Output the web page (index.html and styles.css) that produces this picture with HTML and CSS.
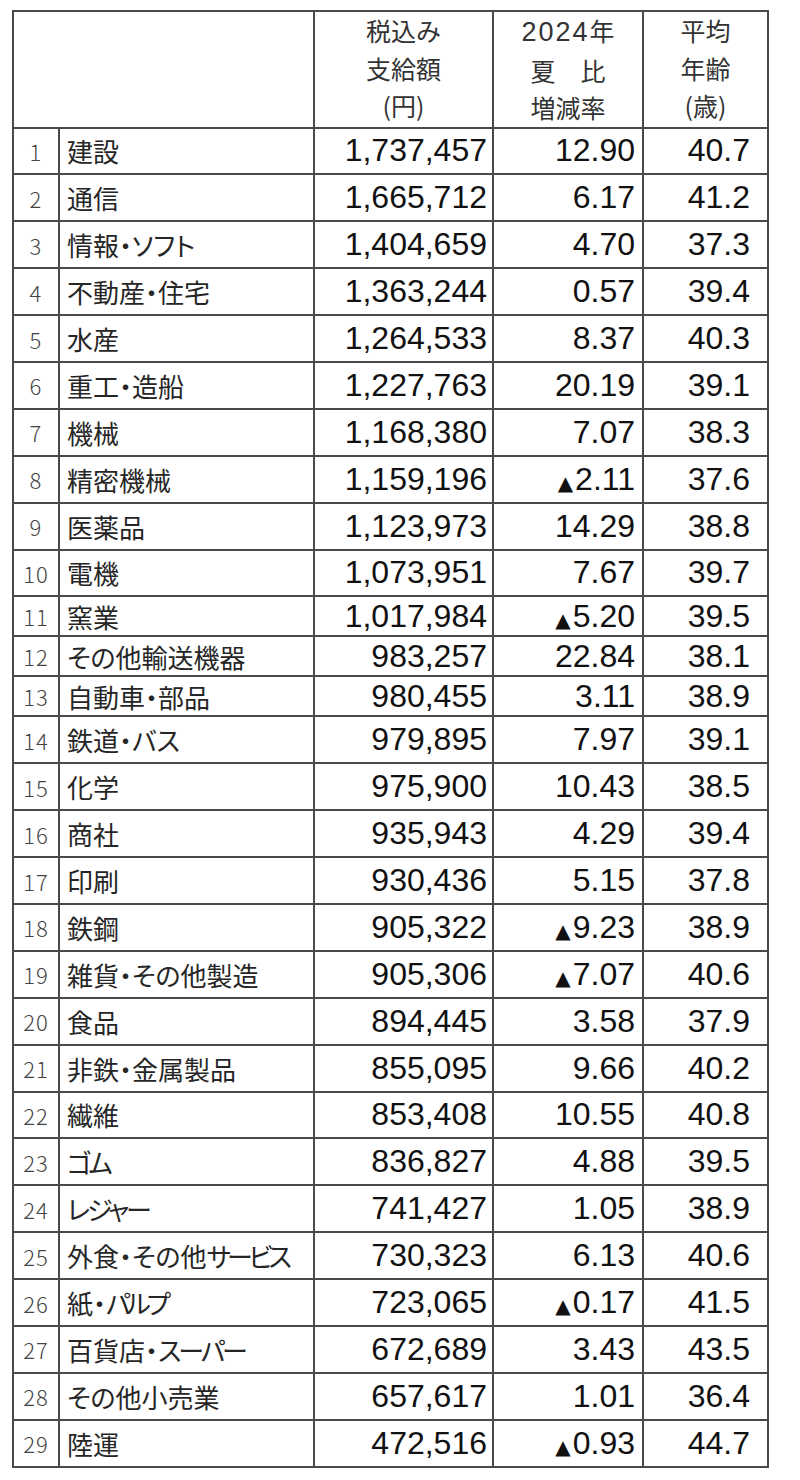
FILE: index.html
```html
<!DOCTYPE html>
<html lang="ja">
<head>
<meta charset="utf-8">
<title>業種別 夏のボーナス</title>
<link rel="stylesheet" href="styles.css">
</head>
<body>
<table class="tbl">
  <colgroup>
    <col class="c-rank"><col class="c-name"><col class="c-amt"><col class="c-rate"><col class="c-age">
  </colgroup>
  <thead>
    <tr class="head">
      <th colspan="2"></th>
      <th><span class="hl">税込み</span><span class="hl">支給額</span><span class="hl">(円)</span></th>
      <th><span class="hl"><span class="hd">2024</span>年</span><span class="hl">夏　比</span><span class="hl">増減率</span></th>
      <th><span class="hl">平均</span><span class="hl">年齢</span><span class="hl">(歳)</span></th>
    </tr>
  </thead>
  <tbody>
    <tr><td class="rank">1</td><td class="name">建設</td><td class="num amt">1,737,457</td><td class="num rate">12.90</td><td class="num age">40.7</td></tr>
    <tr><td class="rank">2</td><td class="name">通信</td><td class="num amt">1,665,712</td><td class="num rate">6.17</td><td class="num age">41.2</td></tr>
    <tr><td class="rank">3</td><td class="name">情報・ソフト</td><td class="num amt">1,404,659</td><td class="num rate">4.70</td><td class="num age">37.3</td></tr>
    <tr><td class="rank">4</td><td class="name">不動産・住宅</td><td class="num amt">1,363,244</td><td class="num rate">0.57</td><td class="num age">39.4</td></tr>
    <tr><td class="rank">5</td><td class="name">水産</td><td class="num amt">1,264,533</td><td class="num rate">8.37</td><td class="num age">40.3</td></tr>
    <tr><td class="rank">6</td><td class="name">重工・造船</td><td class="num amt">1,227,763</td><td class="num rate">20.19</td><td class="num age">39.1</td></tr>
    <tr><td class="rank">7</td><td class="name">機械</td><td class="num amt">1,168,380</td><td class="num rate">7.07</td><td class="num age">38.3</td></tr>
    <tr><td class="rank">8</td><td class="name">精密機械</td><td class="num amt">1,159,196</td><td class="num rate"><span class="tri">▲</span>2.11</td><td class="num age">37.6</td></tr>
    <tr><td class="rank">9</td><td class="name">医薬品</td><td class="num amt">1,123,973</td><td class="num rate">14.29</td><td class="num age">38.8</td></tr>
    <tr><td class="rank">10</td><td class="name">電機</td><td class="num amt">1,073,951</td><td class="num rate">7.67</td><td class="num age">39.7</td></tr>
    <tr class="short"><td class="rank">11</td><td class="name">窯業</td><td class="num amt">1,017,984</td><td class="num rate"><span class="tri">▲</span>5.20</td><td class="num age">39.5</td></tr>
    <tr class="short"><td class="rank">12</td><td class="name">その他輸送機器</td><td class="num amt">983,257</td><td class="num rate">22.84</td><td class="num age">38.1</td></tr>
    <tr class="short"><td class="rank">13</td><td class="name">自動車・部品</td><td class="num amt">980,455</td><td class="num rate">3.11</td><td class="num age">38.9</td></tr>
    <tr><td class="rank">14</td><td class="name">鉄道・バス</td><td class="num amt">979,895</td><td class="num rate">7.97</td><td class="num age">39.1</td></tr>
    <tr><td class="rank">15</td><td class="name">化学</td><td class="num amt">975,900</td><td class="num rate">10.43</td><td class="num age">38.5</td></tr>
    <tr><td class="rank">16</td><td class="name">商社</td><td class="num amt">935,943</td><td class="num rate">4.29</td><td class="num age">39.4</td></tr>
    <tr><td class="rank">17</td><td class="name">印刷</td><td class="num amt">930,436</td><td class="num rate">5.15</td><td class="num age">37.8</td></tr>
    <tr><td class="rank">18</td><td class="name">鉄鋼</td><td class="num amt">905,322</td><td class="num rate"><span class="tri">▲</span>9.23</td><td class="num age">38.9</td></tr>
    <tr><td class="rank">19</td><td class="name">雑貨・その他製造</td><td class="num amt">905,306</td><td class="num rate"><span class="tri">▲</span>7.07</td><td class="num age">40.6</td></tr>
    <tr><td class="rank">20</td><td class="name">食品</td><td class="num amt">894,445</td><td class="num rate">3.58</td><td class="num age">37.9</td></tr>
    <tr><td class="rank">21</td><td class="name">非鉄・金属製品</td><td class="num amt">855,095</td><td class="num rate">9.66</td><td class="num age">40.2</td></tr>
    <tr><td class="rank">22</td><td class="name">繊維</td><td class="num amt">853,408</td><td class="num rate">10.55</td><td class="num age">40.8</td></tr>
    <tr><td class="rank">23</td><td class="name"><span class="k">ゴム</span></td><td class="num amt">836,827</td><td class="num rate">4.88</td><td class="num age">39.5</td></tr>
    <tr><td class="rank">24</td><td class="name"><span class="k">レジャー</span></td><td class="num amt">741,427</td><td class="num rate">1.05</td><td class="num age">38.9</td></tr>
    <tr><td class="rank">25</td><td class="name">外食・その他<span class="k kk">サービス</span></td><td class="num amt">730,323</td><td class="num rate">6.13</td><td class="num age">40.6</td></tr>
    <tr><td class="rank">26</td><td class="name">紙・<span class="k kk">パルプ</span></td><td class="num amt">723,065</td><td class="num rate"><span class="tri">▲</span>0.17</td><td class="num age">41.5</td></tr>
    <tr><td class="rank">27</td><td class="name">百貨店・<span class="k">スーパー</span></td><td class="num amt">672,689</td><td class="num rate">3.43</td><td class="num age">43.5</td></tr>
    <tr><td class="rank">28</td><td class="name">その他小売業</td><td class="num amt">657,617</td><td class="num rate">1.01</td><td class="num age">36.4</td></tr>
    <tr><td class="rank">29</td><td class="name">陸運</td><td class="num amt">472,516</td><td class="num rate"><span class="tri">▲</span>0.93</td><td class="num age">44.7</td></tr>
  </tbody>
</table>
</body>
</html>
```
FILE: styles.css
```css
html, body {
  margin: 0;
  padding: 0;
  background: #ffffff;
}

body {
  font-family: "Noto Sans CJK JP", "Liberation Sans", sans-serif;
  color: #222;
}

.tbl {
  margin: 10px 0 0 12px;
  width: 757px;
  table-layout: fixed;
  border-collapse: separate;
  border-spacing: 2px;
  background: #4a4a4a;
}

.c-rank { width: 44px; }
.c-name { width: 253px; }
.c-amt  { width: 177px; }
.c-rate { width: 148px; }
.c-age  { width: 123px; }

.tbl th,
.tbl td {
  background: #ffffff;
  padding: 0;
  vertical-align: middle;
  white-space: nowrap;
  overflow: hidden;
}

.head th {
  height: 112px;
  font-weight: normal;
  font-size: 25px;
  color: #333;
  text-align: center;
  vertical-align: top;
}

.hl {
  display: block;
  line-height: 37.5px;
}

.hd {
  font-family: "Liberation Sans", Arial, sans-serif;
  font-size: 27px;
  letter-spacing: 2px;
}

.tbl tbody tr td {
  height: 44.9px;
}

.tbl tbody tr.short td {
  height: 38px;
}

.rank {
  font-size: 22px;
  font-weight: 300;
  color: #444;
  text-align: center;
  letter-spacing: 1px;
}

.name {
  font-size: 26px;
  color: #262626;
  padding-left: 7px !important;
  font-feature-settings: "palt";
}

.k {
  letter-spacing: -3px;
}

.kk {
  letter-spacing: -4px;
}

.num {
  font-family: "Liberation Sans", Arial, sans-serif;
  font-size: 32px;
  color: #111;
  text-align: right;
}

.amt  { padding-right: 5px !important; }
.rate { padding-right: 7px !important; }
.age  { padding-right: 17px !important; }

.tri {
  font-family: "DejaVu Sans", sans-serif;
  font-size: 20px;
  margin-right: 2px;
}
```
